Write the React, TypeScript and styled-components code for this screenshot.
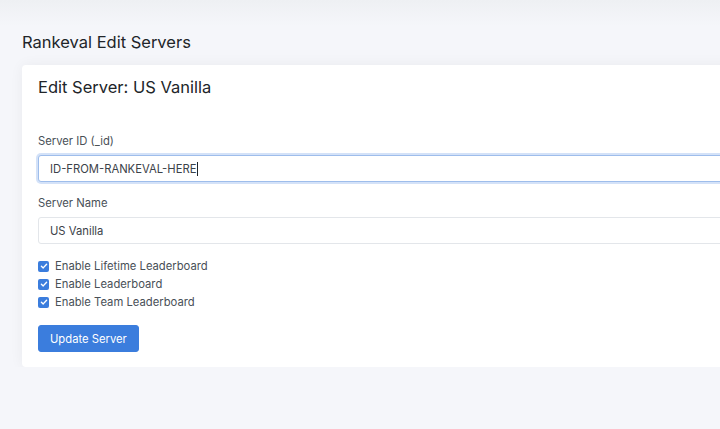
import styled, { createGlobalStyle } from "styled-components";

const GlobalStyle = createGlobalStyle`
  html, body {
    margin: 0;
    padding: 0;
    background: #f5f6fa;
    overflow: hidden;
  }
  body {
    font-family: Inter, "Noto Sans", "Liberation Sans", sans-serif;
    color: #212529;
  }
`;

// 상단 헤더 그림자 띠
const TopShade = styled.div`
  height: 26px;
  background: linear-gradient(to bottom, #eef0f3, #f5f6fa);
`;

const Main = styled.main`
  padding: 0 0 0 22px;
`;

const PageTitle = styled.h1`
  margin: 6px 0 13px;
  font-size: 16.5px;
  font-weight: 400;
  line-height: 20px;
  color: #212529;
`;

const Card = styled.section`
  width: 760px;
  background: #fff;
  border-radius: 4px;
  box-shadow: 0 0 14px 0 rgba(33, 37, 41, 0.05);
`;

const CardHeader = styled.div`
  padding: 12px 16px;
  font-size: 16.5px;
  line-height: 20px;
  color: #212529;
`;

const CardBody = styled.div`
  padding: 24px 16px 15px;
`;

const FormGroup = styled.div`
  margin-bottom: 13px;
`;

const Label = styled.label`
  display: block;
  margin-bottom: 6px;
  font-size: 11.25px;
  line-height: 16px;
  color: #495057;
`;

const Field = styled.div<{ $focused?: boolean }>`
  display: flex;
  align-items: center;
  box-sizing: border-box;
  height: 27px;
  padding: 0 11px;
  font-size: 11.25px;
  color: #3b4249;
  background: #fff;
  border: 1px solid ${(p) => (p.$focused ? "#9ebdeb" : "#e3e6ea")};
  border-radius: 3px;
  box-shadow: ${(p) => (p.$focused ? "0 0 0 2px rgba(59, 125, 221, 0.22)" : "none")};
`;

const Caret = styled.span`
  display: inline-block;
  width: 1px;
  height: 14px;
  margin-left: 1px;
  background: #212529;
`;

const CheckList = styled.div`
  margin-bottom: 14px;
`;

const CheckRow = styled.label`
  display: flex;
  align-items: center;
  height: 18px;
  font-size: 11.25px;
  color: #495057;
`;

const Box = styled.span`
  display: flex;
  align-items: center;
  justify-content: center;
  width: 11px;
  height: 11px;
  margin-right: 6px;
  border-radius: 2px;
  background: #3b7ddd;
`;

const Button = styled.button`
  height: 27px;
  padding: 0 11px;
  font-family: inherit;
  font-size: 11.25px;
  color: #fff;
  background: #3b7ddd;
  border: 1px solid #3b7ddd;
  border-radius: 3px;
  cursor: pointer;
`;

const Check = ({ label }: { label: string }) => (
  <CheckRow>
    <Box>
      <svg width="8" height="8" viewBox="0 0 8 8">
        <path d="M1.4 4.2 L3.2 5.9 L6.6 2.2" fill="none" stroke="#fff" strokeWidth="1.4" strokeLinecap="round" strokeLinejoin="round" />
      </svg>
    </Box>
    {label}
  </CheckRow>
);

const App = () => {
  return (
    <>
      <GlobalStyle />
      <TopShade />
      <Main>
        <PageTitle>Rankeval Edit Servers</PageTitle>
        <Card>
          <CardHeader>Edit Server: US Vanilla</CardHeader>
          <CardBody>
            <FormGroup>
              <Label>Server ID (_id)</Label>
              <Field $focused>
                ID-FROM-RANKEVAL-HERE
                <Caret />
              </Field>
            </FormGroup>
            <FormGroup>
              <Label>Server Name</Label>
              <Field>US Vanilla</Field>
            </FormGroup>
            <CheckList>
              <Check label="Enable Lifetime Leaderboard" />
              <Check label="Enable Leaderboard" />
              <Check label="Enable Team Leaderboard" />
            </CheckList>
            <Button>Update Server</Button>
          </CardBody>
        </Card>
      </Main>
    </>
  );
};

export default App;
